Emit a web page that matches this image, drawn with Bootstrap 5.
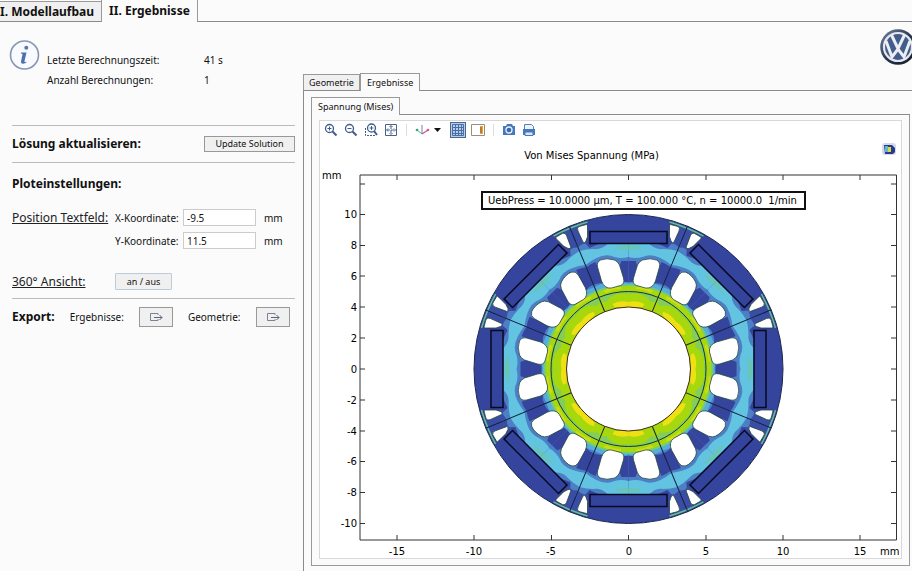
<!DOCTYPE html>
<html lang="de">
<head>
<meta charset="utf-8">
<meta name="viewport" content="width=device-width, initial-scale=1">
<title>Ergebnisse</title>
<link href="https://cdn.jsdelivr.net/npm/bootstrap@5.3.0/dist/css/bootstrap.min.css" rel="stylesheet">
<style>
body{font-family:"Noto Sans","Open Sans",sans-serif;font-size:10px;line-height:14px;color:#111;background:#fbfbfc;overflow-x:hidden}
.tabline{border-bottom:1px solid #8b8b8b}
.tabbtn{border:1px solid #999;border-bottom:0;background:#f0f0f0;color:#111;white-space:nowrap}
.tabbtn.active{background:#fbfbfc;margin-bottom:-1px}
.maintabs .tabbtn{font-size:12px;font-weight:700;height:20px;line-height:20px;padding:0 7px}
.maintabs .tabbtn:first-child{border-left:0;border-right:0;padding:0 7px 0 0}
.maintabs .tabbtn.active{height:22px;line-height:22px;border-top:0}
.subtabs .tabbtn{font-size:9px;height:16px;line-height:14px;padding:0 5px}
.subtabs .tabbtn.active{height:18px;padding:0 6px;line-height:16px}
.side{width:303px;padding:18px 8px 0 12px}
.side h2{font-size:12px;font-weight:700;line-height:18px;margin:0}
.side hr{margin:0;border-color:#bbb;opacity:1}
.infoicon{margin-left:-3px}
.facts{line-height:20px;padding:10px 0 0 7px}
.facts .factname{width:157px}
.facts-block{padding-bottom:35px}
.update-row{height:36px}
.linklike{font-size:12px;line-height:17px;color:#222;width:103px;white-space:nowrap}
.fieldlabel{width:68px;white-space:nowrap}
.coord{width:73px;height:17px;border:1px solid #ccc;border-radius:0;padding:0 3px;font-size:10px;line-height:14px;min-height:0;color:#111;background:#fff}
.coords{row-gap:6px}
.exportrow{gap:15px}
.cmd{border:1px solid #999;border-radius:0;background:#f0f0f0;font-size:9px;line-height:12px;padding:0;height:16px;color:#111}
.cmd.update{width:91px}
.cmd.toggle{width:57px;height:17px;border-color:#bccbd8;border-radius:1px}
.cmd.export{width:34px;height:20px}
.brand{height:51px}
.brand svg{margin-right:-5px}
.outerpane{border-left:1px solid #8b8b8b;padding:6px 2px 5px 7px}
.innerpane{border:1px solid #999;border-top:0;padding:5px 7px 6px}
.plotbox{background:#fff;border:1px solid #d8d8d8}
.toolbar{height:18px;padding-left:3px}
.tool{border:0;background:none;padding:0;width:16px;height:16px;line-height:0}
.tool.on{background:#b8cde8;outline:1px solid #476991;outline-offset:-1px}
.tool.arrow{width:8px}
.sep{width:1px;height:12px;background:#ddd;margin:0 3px}
.plot{display:block;width:100%;height:auto;font-family:"DejaVu Sans",sans-serif;font-size:10px}
</style>
<script src="https://cdn.jsdelivr.net/npm/bootstrap@5.3.0/dist/js/bootstrap.bundle.min.js"></script>
</head>
<body>
<div class="d-flex flex-column min-vh-100">
<nav class="maintabs tabline d-flex align-items-end" aria-label="Hauptbereiche">
  <button class="tabbtn" type="button">I. Modellaufbau</button>
  <button class="tabbtn active" type="button">II. Ergebnisse</button>
</nav>
<main class="d-flex flex-grow-1">
  <aside class="side flex-shrink-0">
    <div class="facts-block d-flex align-items-start">
      <svg class="infoicon flex-shrink-0" width="31" height="31" viewBox="0 0 31 31" aria-hidden="true">
        <circle cx="15.500" cy="15" r="14" fill="#f8faff" stroke="#8796b3" stroke-width="1.600"/>
        <circle cx="17.300" cy="7.800" r="2" fill="#5878ad"/>
        <path d="M12 12.500h5.500l-2 8.500q-.4 1.800 2 .8l-.3 1q-5.500 2.500-5.200-1.300l1.500-7q.2-1-1.700-.9z" fill="#4c70aa"/>
      </svg>
      <div class="facts flex-grow-1">
        <div class="d-flex"><span class="factname">Letzte Berechnungszeit:</span><span>41 s</span></div>
        <div class="d-flex"><span class="factname">Anzahl Berechnungen:</span><span>1</span></div>
      </div>
    </div>
    <hr>
    <div class="update-row d-flex justify-content-between align-items-center">
      <h2>Lösung aktualisieren:</h2>
      <button class="cmd update" type="button">Update Solution</button>
    </div>
    <hr>
    <h2 class="pt-2 mt-1">Ploteinstellungen:</h2>
    <div class="d-flex mt-3">
      <a href="#" class="linklike flex-shrink-0">Position Textfeld:</a>
      <div class="coords d-flex flex-column">
        <div class="d-flex align-items-center"><label class="fieldlabel" for="xk">X-Koordinate:</label><input class="coord form-control" id="xk" value="-9.5"><span class="ms-2">mm</span></div>
        <div class="d-flex align-items-center"><label class="fieldlabel" for="yk">Y-Koordinate:</label><input class="coord form-control" id="yk" value="11.5"><span class="ms-2">mm</span></div>
      </div>
    </div>
    <div class="d-flex align-items-center mt-4">
      <a href="#" class="linklike">360° Ansicht:</a>
      <button class="cmd toggle" type="button">an / aus</button>
    </div>
    <hr class="mt-2">
    <div class="exportrow d-flex align-items-center pt-2">
      <h2>Export:</h2>
      <span>Ergebnisse:</span>
      <button class="cmd export" type="button" aria-label="Ergebnisse exportieren"><svg width="14" height="9" viewBox="0 0 14 9" fill="none" stroke="#7c8196"><path d="M9 2V.5H1.500v7H9V6"/><path d="M5 4.500h8M10.500 2l2.500 2.500L10.500 7" stroke="#59627e"/></svg></button>
      <span>Geometrie:</span>
      <button class="cmd export" type="button" aria-label="Geometrie exportieren"><svg width="14" height="9" viewBox="0 0 14 9" fill="none" stroke="#7c8196"><path d="M9 2V.5H1.500v7H9V6"/><path d="M5 4.500h8M10.500 2l2.500 2.500L10.500 7" stroke="#59627e"/></svg></button>
    </div>
  </aside>
  <section class="flex-grow-1 d-flex flex-column" style="min-width:0">
    <div class="brand d-flex justify-content-end pt-1">
      <svg width="38" height="40" viewBox="-19 -20 38 40" role="img" aria-label="VW">
        <defs><linearGradient id="rim" x2="1" y2="1"><stop offset="0" stop-color="#7888a3"/><stop offset=".5" stop-color="#29364f"/><stop offset="1" stop-color="#101827"/></linearGradient></defs>
        <circle cy="1" r="17.800" fill="url(#rim)"/>
        <circle cy="1" r="14" fill="#415d8c" stroke="#e6e8ee" stroke-width="2.200"/>
        <path d="M-6.500-12L-.8 0H.8L6.500-12M-12-6l6 16L0 2l6 8L12-6" transform="translate(0 1)" fill="none" stroke="#eceef2" stroke-width="3"/>
      </svg>
    </div>
    <nav class="subtabs tabline d-flex align-items-end" aria-label="Ansichten">
      <button class="tabbtn" type="button">Geometrie</button>
      <button class="tabbtn active" type="button">Ergebnisse</button>
    </nav>
    <div class="outerpane flex-grow-1">
      <nav class="subtabs tabline d-flex align-items-end" aria-label="Plots"><button class="tabbtn active" type="button">Spannung (Mises)</button></nav>
      <div class="innerpane">
        <div class="plotbox">
          <div class="toolbar d-flex align-items-center gap-1">
            <button class="tool" type="button" aria-label="Vergrößern"><svg width="16" height="16" fill="none" stroke="#3f5c8c"><circle cx="6.500" cy="6.500" r="4" stroke-width="1.300"/><path d="M4.500 6.500h4M6.500 4.500v4"/><path d="M9.500 9.500l4 4" stroke-width="2"/></svg></button>
            <button class="tool" type="button" aria-label="Verkleinern"><svg width="16" height="16" fill="none" stroke="#3f5c8c"><circle cx="6.500" cy="6.500" r="4" stroke-width="1.300"/><path d="M4.500 6.500h4"/><path d="M9.500 9.500l4 4" stroke-width="2"/></svg></button>
            <button class="tool" type="button" aria-label="Ausschnitt"><svg width="16" height="16" fill="none" stroke="#3f5c8c"><path d="M2.500 6v7.500H12" stroke-dasharray="2 1"/><circle cx="8.500" cy="6" r="4" stroke-width="1.300"/><path d="M6.500 6h4M8.500 4v4"/><path d="M11 9l3 4" stroke-width="2"/></svg></button>
            <button class="tool" type="button" aria-label="Einpassen"><svg width="16" height="16" fill="none" stroke="#4a6389"><path d="M2.500 2.500h11v11h-11z"/><path d="M8 4v8M4 8h8" stroke-dasharray="3 1"/><path d="M6.500 5L8 3.500 9.500 5M6.500 11L8 12.500 9.500 11M5 6.500L3.500 8 5 9.500M11 6.500L12.500 8 11 9.500"/></svg></button>
            <span class="sep"></span>
            <button class="tool" type="button" aria-label="Ansicht"><svg width="16" height="16" fill="none"><path d="M8 12V3" stroke="#6882bf"/><path d="M8 12L3 8" stroke="#4faf8a"/><path d="M8 12l6-4" stroke="#cf5b83" stroke-width="1.300"/><circle cx="3" cy="8" r="1.300" fill="#35a773"/><circle cx="14" cy="8" r="1.300" fill="#cf5b83"/></svg></button>
            <button class="tool arrow" type="button" aria-label="Ansicht wählen"><svg width="8" height="16"><path d="M0 6h7L3.500 10z" fill="#111"/></svg></button>
            <button class="tool on ms-1" type="button" aria-label="Gitter"><svg width="16" height="16" fill="none" stroke="#496ea5"><path d="M2.500 2.500h11v11h-11zM5.500 2v12M8.500 2v12M11.500 2v12M2 5.500h12M2 8.500h12M2 11.500h12"/></svg></button>
            <button class="tool" type="button" aria-label="Legende"><svg width="16" height="16" fill="none"><path d="M1.500 2.500h13v11h-13z" stroke="#9a8d7d"/><path d="M10 4h3v8h-3z" fill="#e6a63d"/><path d="M11 5v6" stroke="#8d5229"/></svg></button>
            <span class="sep"></span>
            <button class="tool" type="button" aria-label="Bild"><svg width="16" height="16"><path d="M2 4h3l1-2h5l1 2h2v9H2z" fill="#4678bd"/><circle cx="8" cy="8" r="3" fill="#3a69ab" stroke="#e7f0fb" stroke-width="1.300"/></svg></button>
            <button class="tool" type="button" aria-label="Drucken"><svg width="16" height="16"><path d="M3.500 7V2.500h7l2 2V7" fill="#eef4fb" stroke="#5580bb"/><path d="M2 7h12v6H2z" fill="#4678bd"/><path d="M4 10h8v3.500H4z" fill="#dce7f5" stroke="#4678bd"/></svg></button>
          </div>
          <svg class="plot" viewBox="0 0 581 419" role="img" aria-label="Von Mises Spannung">
            <defs>
              <clipPath id="ring"><path clip-rule="evenodd" d="M-154.500 0a154.500 154.500 0 1 1 309 0a154.500 154.500 0 1 1-309 0zM-62 0a62 62 0 1 0 124 0a62 62 0 1 0-124 0z"/></clipPath>
              <g id="fieldhalf">
                <!-- medium, light and teal stress bands around the flux barrier -->
                <path d="M0-126H27Q33-124 39-121L46-129 53-128 34-82H0z" fill="#4c7fc5"/>
                <path d="M41-132L54-146 58-140 50-122Q44-128 40-124z" fill="#3a4da5"/>
                <path d="M0-125H21Q27-119 35-120 42-120 49-118L43-104Q38-108 32-111 22-116 14-112 7-110 0-112z" fill="#62c4e0"/>
                <path d="M0-124Q8-124 14-120 7-120 0-119z" fill="#69c5b4"/>
                <path d="M0-108H7Q11-100 8-94L4-87H0z" fill="#35449c"/>
                <path d="M33-107Q38-105 42-102L35-84Q30-87 24-85z" fill="#35449c"/>
                <path d="M0-86L6-87 18-83 25-86 34-82 30-72H0z" fill="#55addb"/>
              </g>
              <g id="innerhalf">
                <path d="M0-67Q9-69 16-65L14-62H0z" fill="#efe014"/>
                <path d="M0-75Q8-77 14-74 20-71 22-67L26-67 29-71Q25-75 17-76 8-78 0-77z" fill="#83cd59"/>
                <path d="M8-82Q16-83 25-78L22-76Q16-80 7-80z" fill="#cddd12"/>
              </g>
              <g id="holehalf">
                <path d="M14-109Q22-111.500 28-109 32-107 31-102L27-88Q24-80 17-81L8-83.500Q3.500-85 5-91L9-104Q11-108 14-109z" fill="#fff" stroke="#25463e" stroke-width=".8"/>
                <path d="M42-144.500L49.500-142.500Q52-141 50.500-138L45.500-127Q44-125 42.500-128L41-132.500 41-143Q41-144.500 42-144.500z" fill="#fff" stroke="#25463e" stroke-width=".8"/>
                <path d="M42-148A154 154 0 0 1 59-142" transform="translate(-1 1)" fill="none" stroke="#62be91" stroke-width="1.500"/>
              </g>
              <g id="field"><use href="#fieldhalf"/><use href="#fieldhalf" transform="scale(-1 1)"/></g>
              <g id="inner"><use href="#innerhalf"/><use href="#innerhalf" transform="scale(-1 1)"/></g>
              <g id="parts">
                <use href="#holehalf"/><use href="#holehalf" transform="scale(-1 1)"/>
                <rect x="-38.500" y="-137.500" width="77" height="12" fill="#34439b" stroke="#060a20" stroke-width="1.500"/>
                <path d="M23.700-57.300L59-142.700" stroke="#14203f"/>
              </g>
            </defs>
            <text x="271.500" y="20" text-anchor="middle">Von Mises Spannung (MPa)</text>
            <g transform="translate(562 4)"><rect width="14" height="12" rx="3" fill="#d3d9ef"/><path d="M2 2h8l3 3v4l-2 2H3z" fill="#273b88"/><path d="M3 3h3v6H3z" fill="#63b5cf"/><path d="M6 4h3v5H6z" fill="#d5dd42"/></g>
            <path d="M40 36H576.500V401H40z" fill="none" stroke="#333"/>
            <path d="M77 36v5m77-5v5m77.500-5v5m77-5v5m77.500-5v5m77-5v5m77-5v5M77 401v-5m77 5v-5m77.500 5v-5m77 5v-5m77.500 5v-5m77 5v-5m77 5v-5M40 45h5m-5 30.500h5m-5 31h5m-5 30.500h5m-5 31h5m-5 31h5m-5 31h5m-5 31h5m-5 31h5m-5 30.500h5m-5 31h5m-5 31h5M576 45h-5m5 30.500h-5m5 31h-5m5 30.500h-5m5 31h-5m5 31h-5m5 31h-5m5 31h-5m5 31h-5m5 30.500h-5m5 31h-5m5 31h-5" fill="none" stroke="#333"/>
            <g text-anchor="end">
              <text x="37" y="79">10</text><text x="37" y="110">8</text><text x="37" y="141">6</text><text x="37" y="172">4</text><text x="37" y="203">2</text><text x="37" y="234">0</text><text x="37" y="265">-2</text><text x="37" y="296">-4</text><text x="37" y="326">-6</text><text x="37" y="357">-8</text><text x="37" y="388">-10</text>
            </g>
            <g text-anchor="middle">
              <text x="77" y="416">-15</text><text x="154" y="416">-10</text><text x="231" y="416">-5</text><text x="309" y="416">0</text><text x="386" y="416">5</text><text x="463" y="416">10</text><text x="540" y="416">15</text>
            </g>
            <text x="2" y="40">mm</text><text x="560" y="416">mm</text>
            <rect x="162" y="53" width="323" height="17" fill="#fff" stroke="#111" stroke-width="2"/>
            <text x="168" y="65" xml:space="preserve">UebPress = 10.0000 µm, T = 100.000 °C, n = 10000.0  1/min</text>
            <g transform="translate(308.500 230)">
              <g clip-path="url(#ring)">
                <circle r="154.500" fill="#35449c"/>
                <use href="#field"/><use href="#field" transform="rotate(45)"/><use href="#field" transform="rotate(90)"/><use href="#field" transform="rotate(135)"/><use href="#field" transform="rotate(180)"/><use href="#field" transform="rotate(225)"/><use href="#field" transform="rotate(270)"/><use href="#field" transform="rotate(315)"/>
                <circle r="85" fill="#72c982"/><circle r="83" fill="#a6d80d"/>
                <use href="#inner"/><use href="#inner" transform="rotate(45)"/><use href="#inner" transform="rotate(90)"/><use href="#inner" transform="rotate(135)"/><use href="#inner" transform="rotate(180)"/><use href="#inner" transform="rotate(225)"/><use href="#inner" transform="rotate(270)"/><use href="#inner" transform="rotate(315)"/>
              </g>
              <use href="#parts"/><use href="#parts" transform="rotate(45)"/><use href="#parts" transform="rotate(90)"/><use href="#parts" transform="rotate(135)"/><use href="#parts" transform="rotate(180)"/><use href="#parts" transform="rotate(225)"/><use href="#parts" transform="rotate(270)"/><use href="#parts" transform="rotate(315)"/>
              <circle r="154.500" fill="none" stroke="#16244a"/>
              <circle r="77.500" fill="none" stroke="#17334a"/>
              <circle r="62" fill="none" stroke="#4b2c14"/>
            </g>
          </svg>
        </div>
      </div>
    </div>
  </section>
</main>
</div>
</body>
</html>
